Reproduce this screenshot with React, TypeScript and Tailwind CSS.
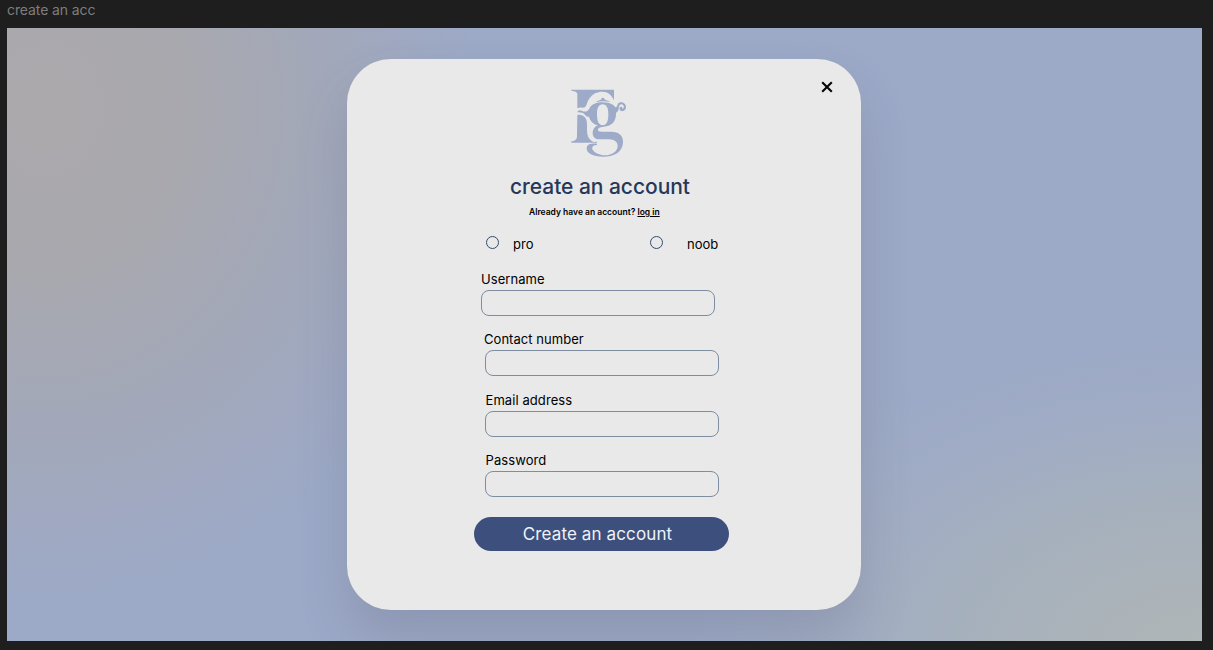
import React from "react";

function Logo() {
  return (
    <svg viewBox="0 0 240 255" className="ml-[213px] block h-[85px] w-20 shrink-0" aria-label="Fg">
      <g fill="#9dabc9">
        <path d="M34 29H162V61C158 53 155 48 148 42C138 34 121 32 105 40C91 48 84 60 80 73C77 81 74 83 69 83C63 83 57 82 52 85V43C52 36 44 33 34 32Z" />
        <path d="M52 105C64 103 74 108 79 119C82 128 81 140 81 151C81 167 86 177 96 184C101 187 106 185 111 185V188H34V184C46 183 51 178 51 168Z" />
        <path d="M52 97C53 90 60 89 66 92C74 97 83 96 89 84C95 73 109 67 128 67C142 67 153 70 161 76C164 80 166 83 169 81C173 79 171 71 177 68C186 64 198 70 198 81C198 91 189 96 182 92C176 88 178 79 184 80C187 81 187 84 187 86C193 86 194 75 185 73C178 71 177 79 176 86C175 94 171 96 168 99C169 123 156 139 131 140C119 141 112 145 114 151C116 156 124 155 134 155H155C176 155 189 166 189 185C189 214 165 230 130 230C98 230 80 220 80 205C80 194 91 190 111 191V195C99 194 93 203 99 211C105 219 119 226 134 226C157 226 173 213 173 198C173 185 162 179 147 178H119C104 178 98 170 98 158C98 148 104 140 113 136C98 132 90 121 87 110C80 113 76 104 70 100C64 97 59 97 52 97ZM128 73C116 73 111 84 111 103C111 124 116 136 128 136C140 136 145 124 145 103C145 84 140 73 128 73Z" fillRule="evenodd" />
        <path d="M107 66C113 61 121 62 124 57C125 52 132 52 133 57C137 62 145 61 151 66C138 63 121 63 107 66Z" />
      </g>
    </svg>
  );
}

function Radio({ className, label, gap }: { className: string; label: string; gap: string }) {
  return (
    <label className={`flex h-5 items-start ${className}`}>
      <input type="radio" name="level" className="mt-[2px] size-[13px] shrink-0 appearance-none rounded-full border border-[#34496c]" />
      <span className={`text-[13px] leading-5 ${gap}`}>{label}</span>
    </label>
  );
}

function Field({ label, type, labelClass, className }: { label: string; type: string; labelClass: string; className: string }) {
  return (
    <label className={`block w-[234px] ${className}`}>
      <span className={`block h-5 whitespace-nowrap text-[13px] leading-[19px] ${labelClass}`}>{label}</span>
      <input type={type} className="block h-[26px] w-[234px] rounded-[8px] border border-[#7e8da0] bg-transparent px-2 text-[13px] outline-none" />
    </label>
  );
}

export default function App() {
  return (
    <div className="flex h-[650px] w-[1213px] flex-col overflow-hidden bg-[#1e1e1e] pl-[7px] font-['Inter',sans-serif]">
      <div className="h-[28px] shrink-0 text-[14px] leading-[20px] tracking-[-0.1px] text-[#7d7d7d]">create an acc</div>
      <main className="flex h-[613px] w-[1195px] shrink-0 overflow-hidden bg-[#9ca9c7] bg-[radial-gradient(ellipse_430px_500px_at_40px_80px,#aba9ab_0%,#a9a8ae_30%,#a3a8b8_60%,#9ca9c700_100%),radial-gradient(ellipse_520px_330px_at_1195px_630px,#b0b6b7_0%,#a7b1bc_42%,#a0acc4_75%,#9ca9c700_100%)]">
        <section className="mt-[31px] ml-[340px] flex h-[551px] w-[514px] flex-col rounded-[44px] bg-[#e9e9e9] pt-[21px] text-black shadow-[0_28px_50px_rgba(80,80,100,0.2)]">
          <div className="flex items-start">
            <Logo />
            <button aria-label="Close" className="ml-[181px] flex h-[13px] w-3">
              <svg viewBox="0 0 12 13" className="h-[13px] w-3" stroke="#050505" strokeWidth="2.1" fill="none">
                <path d="M1.2 2.2L10.8 11.8M10.8 2.2L1.2 11.8" />
              </svg>
            </button>
          </div>
          <h1 className="mt-[6px] ml-[163px] h-[30px] whitespace-nowrap text-[21px] leading-[31px] tracking-[-0.04px] font-medium text-[#26385a]">create an account</h1>
          <p className="mt-[5px] ml-[182px] h-3 whitespace-nowrap text-[8.5px] leading-3 font-semibold">
            Already have an account? <a className="underline" href="#">log in</a>
          </p>
          <div className="mt-4 ml-[138.5px] flex">
            <Radio className="w-[164px]" label="pro" gap="ml-[14.5px]" />
            <Radio className="w-[80px]" label="noob" gap="ml-[24.5px]" />
          </div>
          <Field className="mt-4 ml-[134px]" label="Username" type="text" labelClass="tracking-[0.05px]" />
          <Field className="mt-[14px] ml-[138px]" label="Contact number" type="tel" labelClass="-ml-px tracking-[0.05px]" />
          <Field className="mt-[15px] ml-[138px]" label="Email address" type="email" labelClass="ml-[0.5px] tracking-[0.08px]" />
          <Field className="mt-[14px] ml-[138px]" label="Password" type="password" labelClass="ml-[0.5px] tracking-[0.08px]" />
          <button className="mt-5 ml-[127px] h-[34px] w-[255px] rounded-full bg-[#3d507d] pr-2 text-[17px] leading-[34px] tracking-[0.12px] text-[#f0f2f6]">Create an account</button>
        </section>
      </main>
    </div>
  );
}
